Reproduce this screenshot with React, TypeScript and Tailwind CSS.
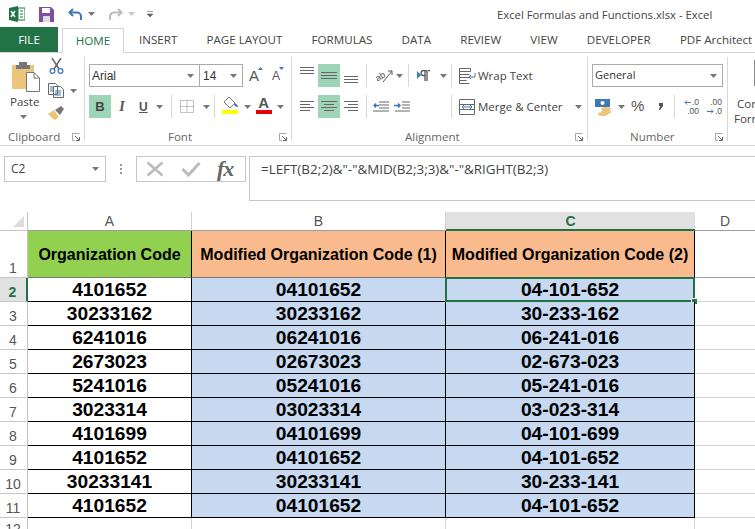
import React from "react";

const ribbonFont = "font-['Open_Sans',sans-serif]";
const groupLabel = "font-['Open_Sans',sans-serif] text-[11.5px] leading-[16px] text-[#666] whitespace-nowrap";
const groupBox = "shrink-0 border-r border-[#d8d8d8] h-[84px] flex flex-col [&>*]:shrink-0";

function Caret({ className = "" }: { className?: string }) {
  return (
    <svg width="7" height="4" viewBox="0 0 7 4" className={`shrink-0 ${className}`}>
      <path d="M0 0h7L3.5 4z" fill="#777" />
    </svg>
  );
}

function Launcher() {
  return (
    <svg width="8" height="8" viewBox="0 0 8 8" className="shrink-0 ml-auto">
      <path d="M.5 3V.5H7.500M.5 .5V7.500H3" fill="none" stroke="#aaa" />
      <path d="M3 3L7 7M7.500 4V7.500H4" fill="none" stroke="#666" />
    </svg>
  );
}

function Sep({ className = "" }: { className?: string }) {
  return <div className={`w-px h-[23px] bg-[#d8d8d8] shrink-0 ${className}`} />;
}

function AlignLines({ rows, active = false, className = "" }: { rows: number[][]; active?: boolean; className?: string }) {
  return (
    <div className={`h-[23px] flex items-center justify-center shrink-0 ${active ? "w-[22px] bg-[#9fd5b7]" : "w-[14px]"} ${className}`}>
      <svg width={active ? 16 : 14} height="23" viewBox={active ? "0 0 16 23" : "0 0 14 23"}>
        {rows.map((r, i) => (
          <path key={i} d={`M${r[1]} ${r[0]}.5H${r[2]}`} stroke="#666" strokeWidth="1" />
        ))}
      </svg>
    </div>
  );
}

function Clipboard() {
  return (
    <div className={`w-[85px] pr-[4px] ${groupBox}`}>
      <div className="flex h-[72px] pt-[5px]">
        <div className="w-[48px] flex flex-col items-start">
          <svg width="28" height="30" viewBox="0 0 28 30" className="ml-[12px]">
            <path d="M0 3h22v24H0z" fill="#ecc57d" />
            <path d="M7 0h8v3h3v4H4V3h3z" fill="#777" />
            <path d="M14.500 10.500H22l5.500 5.500V29.500H14.500z" fill="#fff" stroke="#777" />
            <path d="M22 10.500V16h5.500" fill="none" stroke="#777" />
          </svg>
          <div className={`${ribbonFont} text-[11.5px] leading-[14px] text-[#444] mt-[3px] ml-[10px]`}>Paste</div>
          <Caret className="mt-[6px] ml-[20px]" />
        </div>
        <div className="flex flex-col mt-[-4px]">
          <svg width="15" height="16" viewBox="0 0 15 16" className="ml-[1px]">
            <path d="M3 0l7 11M12 0L5 11" stroke="#666" strokeWidth="1.500" fill="none" />
            <circle cx="3.500" cy="13" r="2.400" fill="none" stroke="#3f79b5" strokeWidth="1.300" />
            <circle cx="11.500" cy="13" r="2.400" fill="none" stroke="#3f79b5" strokeWidth="1.300" />
          </svg>
          <div className="flex items-center mt-[9px]">
            <svg width="16" height="15" viewBox="0 0 16 15">
              <path d="M.5.500h7l2 2v9H.5zM5.500 3.500h7l3 3v8h-10z" fill="#fff" stroke="#666" />
              <path d="M2 4h3M2 6h3M2 8h3M7 8h6M7 10h6M7 12h6" stroke="#3f79b5" />
            </svg>
            <Caret className="ml-[6px]" />
          </div>
          <svg width="17" height="14" viewBox="0 0 17 14" className="mt-[8px]">
            <path d="M0 8l6-4 5 7-4 3C5 13 2 10 0 8z" fill="#ecc57d" />
            <path d="M7 4l6-4 3 3-4 6z" fill="#777" />
          </svg>
        </div>
      </div>
      <div className="flex items-center">
        <div className={`${groupLabel} ml-[8px]`}>Clipboard</div>
        <Launcher />
      </div>
    </div>
  );
}

function FontGroup() {
  return (
    <div className={`w-[207px] pl-[4px] pr-[4px] ${groupBox}`}>
      <div className="flex items-center mt-[7px]">
        <div className="w-[111px] h-[23px] shrink-0 border border-[#ababab] flex items-center justify-between pl-[2px] pr-[5px] font-['Liberation_Sans',sans-serif] text-[12px] text-[#333]">
          Arial
          <Caret />
        </div>
        <div className="w-[43px] h-[23px] shrink-0 border border-[#ababab] border-l-0 flex items-center justify-between pl-[3px] pr-[5px] font-['Liberation_Sans',sans-serif] text-[12px] text-[#333]">
          14
          <Caret />
        </div>
        <div className="w-[23px] ml-[6px] shrink-0 relative font-['Liberation_Sans',sans-serif] text-[15px] leading-[17px] text-[#555]">
          A
          <svg width="5" height="3" viewBox="0 0 5 3" className="absolute top-0 left-[9px]">
            <path d="M0 3h5L2.500 0z" fill="#3f79b5" />
          </svg>
        </div>
        <div className="w-[14px] shrink-0 relative font-['Liberation_Sans',sans-serif] text-[12px] leading-[15px] pt-[2px] text-[#555]">
          A
          <svg width="5" height="3" viewBox="0 0 5 3" className="absolute top-0 left-[7px]">
            <path d="M0 0h5L2.500 3z" fill="#3f79b5" />
          </svg>
        </div>
      </div>
      <div className="flex items-center mt-[8px] h-[23px]">
        <div className="w-[22px] h-[23px] shrink-0 bg-[#9fd5b7] flex items-center justify-center font-['Liberation_Sans',sans-serif] font-bold text-[13px] text-[#444]">
          B
        </div>
        <div className="w-[10px] ml-[6px] shrink-0 font-['Liberation_Serif',serif] italic font-bold text-[14px] text-[#555] text-center">I</div>
        <div className="ml-[12px] shrink-0 font-['Liberation_Sans',sans-serif] font-bold text-[12px] text-[#555] underline">U</div>
        <Caret className="ml-[8px]" />
        <Sep className="ml-[8px]" />
        <svg width="14" height="13" viewBox="0 0 14 13" className="ml-[8px] shrink-0">
          <path d="M.5.500h13v12H.5zM7 .5v12M.5 6.500h13" fill="none" stroke="#888" strokeDasharray="1 1" />
        </svg>
        <Caret className="ml-[9px]" />
        <Sep className="ml-[4px]" />
        <svg width="17" height="18" viewBox="0 0 17 18" className="ml-[7px] shrink-0 mt-[-3px]">
          <path d="M7 1l6 6-5 5-6-6z" fill="#fff" stroke="#777" />
          <path d="M13 7c2 1 3 3 3 4-2 0-3-1-4-2z" fill="#3f79b5" />
          <path d="M0 14h16v4H0z" fill="#ffff00" />
        </svg>
        <Caret className="ml-[5px]" />
        <div className="ml-[5px] w-[16px] shrink-0 flex flex-col items-center mt-[-3px]">
          <div className="font-['Liberation_Sans',sans-serif] font-bold text-[15px] leading-[14px] text-[#555]">A</div>
          <div className="w-[16px] h-[4px] bg-[#e8000f]" />
        </div>
        <Caret className="ml-[5px]" />
      </div>
      <div className="flex items-center mt-[11px]">
        <div className={`${groupLabel} ml-[79px]`}>Font</div>
        <Launcher />
      </div>
    </div>
  );
}

function AlignmentGroup() {
  return (
    <div className={`w-[296px] pl-[8px] pr-[4px] ${groupBox}`}>
      <div className="flex items-center mt-[7px] h-[23px]">
        <AlignLines rows={[[3, 0, 14], [6, 0, 14], [9, 0, 14]]} />
        <AlignLines rows={[[8, 0, 16], [11, 0, 16], [14, 0, 16]]} active className="ml-[4px]" />
        <AlignLines rows={[[12, 0, 14], [15, 0, 14], [18, 0, 14]]} className="ml-[4px]" />
        <Sep className="ml-[8px]" />
        <svg width="18" height="15" viewBox="0 0 18 15" className="ml-[8px] shrink-0 overflow-visible">
          <text x="0" y="12" fontSize="9" fontFamily="Liberation Sans" fill="#555" transform="rotate(-30 4 8)">ab</text>
          <path d="M8 14L17 3M17 3h-4M17 3v4" fill="none" stroke="#555" />
        </svg>
        <Caret className="ml-[3px]" />
        <Sep className="ml-[5px]" />
        <svg width="14" height="12" viewBox="0 0 14 12" className="ml-[8px] shrink-0">
          <path d="M0 1l4 4-4 4z" fill="#3f79b5" />
          <path d="M10 .5H6.500a2.500 2.500 0 0 0 0 5H8V11M10 .5V11M8 .5V5M11 .5h2" fill="none" stroke="#555" strokeWidth="1.300" />
        </svg>
        <Caret className="ml-[9px]" />
        <Sep className="ml-[4px]" />
        <svg width="17" height="16" viewBox="0 0 17 16" className="ml-[7px] shrink-0">
          <path d="M.5.500h11v3H.5zM.5 6.500h10M.5 9.500h10M.5 12.500h7M.5 15.500h10M.5.500v15" fill="none" stroke="#666" />
          <path d="M16 5v4h-6M12 7l-2 2 2 2" fill="none" stroke="#3f79b5" />
        </svg>
        <div className={`${ribbonFont} text-[11.5px] text-[#444] ml-[2px] whitespace-nowrap`}>Wrap Text</div>
      </div>
      <div className="flex items-center mt-[8px] h-[23px]">
        <AlignLines rows={[[6, 0, 14], [9, 0, 10], [12, 0, 14], [15, 0, 10]]} />
        <AlignLines rows={[[6, 0, 16], [9, 3, 13], [12, 0, 16], [15, 3, 13]]} active className="ml-[4px]" />
        <AlignLines rows={[[6, 0, 14], [9, 4, 14], [12, 0, 14], [15, 4, 14]]} className="ml-[4px]" />
        <Sep className="ml-[8px]" />
        <svg width="16" height="11" viewBox="0 0 16 11" className="ml-[6px] shrink-0">
          <path d="M6 1h10M6 4h10M6 7h10M0 10h16" stroke="#666" />
          <path d="M6 4.500H1M3 2.500l-2 2 2 2" fill="none" stroke="#3f79b5" strokeWidth="1.500" />
        </svg>
        <svg width="16" height="11" viewBox="0 0 16 11" className="ml-[5px] shrink-0">
          <path d="M8 1h8M8 4h8M8 7h8M1 10h15" stroke="#666" />
          <path d="M0 4.500h6M4 2.500l2 2-2 2" fill="none" stroke="#3f79b5" strokeWidth="1.500" />
        </svg>
        <Sep className="ml-[41px]" />
        <svg width="16" height="16" viewBox="0 0 16 16" className="ml-[7px] shrink-0">
          <path d="M.5.500h15v15H.5zM.5 5.500h15M.5 10.500h15" fill="#fff" stroke="#666" />
          <path d="M3 8h10M5 6l-2 2 2 2M11 6l2 2-2 2" fill="none" stroke="#3f79b5" />
        </svg>
        <div className={`${ribbonFont} text-[11.5px] text-[#444] ml-[3px] whitespace-nowrap`}>Merge &amp; Center</div>
        <Caret className="ml-[12px]" />
      </div>
      <div className="flex items-center mt-[11px]">
        <div className={`${groupLabel} ml-[105px]`}>Alignment</div>
        <Launcher />
      </div>
    </div>
  );
}

function NumberGroup() {
  return (
    <div className={`w-[140px] pl-[4px] pr-[4px] ${groupBox}`}>
      <div className="w-[131px] h-[23px] mt-[7px] border border-[#ababab] flex items-center justify-between pl-[2px] pr-[5px] font-['Open_Sans',sans-serif] text-[11px] text-[#333]">
        General
        <Caret />
      </div>
      <div className="flex items-center mt-[8px] h-[23px] pl-[3px]">
        <svg width="17" height="18" viewBox="0 0 17 18" className="shrink-0">
          <path d="M0 1h15v8H0z" fill="#3f79b5" />
          <circle cx="7.500" cy="5" r="2" fill="#fff" />
          <ellipse cx="11" cy="11" rx="5" ry="2" fill="#ecc57d" />
          <ellipse cx="11" cy="14" rx="5" ry="2" fill="#ecc57d" />
          <ellipse cx="8" cy="16" rx="5" ry="2" fill="#ecc57d" />
        </svg>
        <Caret className="ml-[6px]" />
        <div className="ml-[6px] w-[13px] shrink-0 font-['Liberation_Sans',sans-serif] text-[15px] text-[#555]">%</div>
        <svg width="6" height="7" viewBox="0 0 6 7" className="ml-[14px] shrink-0">
          <path d="M1 0h4v3L2 7H1l1-4H1z" fill="#555" />
        </svg>
        <Sep className="ml-[10px]" />
        <div className="ml-[7px] w-[17px] shrink-0 font-['Liberation_Sans',sans-serif] text-[8.5px] leading-[9px] text-[#555]">
          <div className="flex items-center justify-end">
            <svg width="7" height="5" viewBox="0 0 7 5" className="mr-[1px]">
              <path d="M7 2.500H1M3 .5l-2 2 2 2" fill="none" stroke="#3f79b5" />
            </svg>
            .0
          </div>
          <div className="text-right">.00</div>
        </div>
        <div className="ml-[6px] w-[17px] shrink-0 font-['Liberation_Sans',sans-serif] text-[8.5px] leading-[9px] text-[#555]">
          <div className="text-right">.00</div>
          <div className="flex items-center justify-end">
            <svg width="7" height="5" viewBox="0 0 7 5" className="mr-[1px]">
              <path d="M0 2.500h6M4 .5l2 2-2 2" fill="none" stroke="#3f79b5" />
            </svg>
            .0
          </div>
        </div>
      </div>
      <div className="flex items-center mt-[11px]">
        <div className={`${groupLabel} ml-[38px]`}>Number</div>
        <Launcher />
      </div>
    </div>
  );
}

function FormulaBar() {
  return (
    <div className="flex mt-[10px] h-[45px] pl-[4px]">
      <div className="w-[102px] h-[26px] shrink-0 border border-[#c6c6c6] flex items-center justify-between pl-[6px] pr-[6px] font-['Open_Sans',sans-serif] text-[12px] text-[#444]">
        C2
        <Caret />
      </div>
      <div className="w-[30px] h-[26px] shrink-0 flex flex-col items-center justify-center gap-[2px]">
        <div className="w-[2px] h-[2px] bg-[#999]" />
        <div className="w-[2px] h-[2px] bg-[#999]" />
        <div className="w-[2px] h-[2px] bg-[#999]" />
      </div>
      <div className="w-[110px] h-[26px] shrink-0 border border-[#c6c6c6] flex items-center pl-[9px]">
        <svg width="18" height="16" viewBox="0 0 18 16" className="shrink-0">
          <path d="M1.500 1.500l15 13M16.500 1.500l-15 13" stroke="#bbb" strokeWidth="2.500" fill="none" />
        </svg>
        <svg width="20" height="16" viewBox="0 0 20 16" className="ml-[17px] shrink-0">
          <path d="M1.500 8l6 6L18.500 2" stroke="#bbb" strokeWidth="3" fill="none" />
        </svg>
        <div className="ml-[16px] font-['Liberation_Serif',serif] italic font-bold text-[22px] leading-[22px] text-[#666] tracking-[-1px]">fx</div>
      </div>
      <div className="ml-[3px] flex-1 h-[45px] border border-r-0 border-[#c6c6c6] pl-[11px] pt-[3px] font-['Open_Sans',sans-serif] text-[13.4px] leading-[19px] text-[#444] whitespace-nowrap">
        =LEFT(B2;2)&amp;"-"&amp;MID(B2;3;3)&amp;"-"&amp;RIGHT(B2;3)
      </div>
    </div>
  );
}

const rows = [
  ["4101652", "04101652", "04-101-652"],
  ["30233162", "30233162", "30-233-162"],
  ["6241016", "06241016", "06-241-016"],
  ["2673023", "02673023", "02-673-023"],
  ["5241016", "05241016", "05-241-016"],
  ["3023314", "03023314", "03-023-314"],
  ["4101699", "04101699", "04-101-699"],
  ["4101652", "04101652", "04-101-652"],
  ["30233141", "30233141", "30-233-141"],
  ["4101652", "04101652", "04-101-652"],
];

const colHead = "h-[19px] pt-[1px] flex items-center justify-center border-b border-[#9e9e9e] font-['Liberation_Sans',sans-serif] text-[14px] text-[#555]";
const headCell =
  "h-[47px] flex items-center justify-center border-r border-black border-b border-b-[#777] font-['Liberation_Sans',sans-serif] font-bold text-[16px] text-black pt-[1px]";
const dataCell =
  "h-[24px] pt-[1px] flex items-center justify-center border-r border-black border-b border-b-black font-['Liberation_Sans',sans-serif] font-bold text-[19.2px] text-black";
const rowHead =
  "flex items-end justify-center pr-[1px] border-r border-b border-[#c6c6c6] font-['Liberation_Sans',sans-serif] text-[14px] leading-[18px] text-[#555]";

function Sheet() {
  return (
    <div className="grid grid-cols-[28px_164px_254px_249px_60px] mt-[11px]">
      <div className="h-[19px] border-r border-b border-[#c6c6c6] flex items-end justify-end pr-[3px] pb-[3px]">
        <svg width="11" height="11" viewBox="0 0 11 11">
          <path d="M11 0v11H0z" fill="#dcdcdc" />
        </svg>
      </div>
      <div className={`${colHead} border-r border-r-[#d0d0d0]`}>A</div>
      <div className={`${colHead} border-r border-r-[#d0d0d0]`}>B</div>
      <div className="h-[19px] pt-[1px] flex items-center justify-center bg-[#e1e1e1] border-b-2 border-[#217346] font-['Liberation_Sans',sans-serif] font-bold text-[14px] text-[#217346]">
        C
      </div>
      <div className={colHead}>D</div>

      <div className={`${rowHead} h-[47px]`}>1</div>
      <div className={`${headCell} bg-[#92d050]`}>Organization Code</div>
      <div className={`${headCell} bg-[#f9bb8d]`}>Modified Organization Code (1)</div>
      <div className={`${headCell} bg-[#f9bb8d]`}>Modified Organization Code (2)</div>
      <div className="h-[47px] border-b border-[#9e9e9e]" />

      {rows.map((row, i) => {
        const selected = i === 0;
        return (
          <React.Fragment key={i}>
            <div
              className={`${rowHead} h-[24px] ${
                selected ? "bg-[#e1e1e1] border-r-2 border-r-[#217346] font-bold text-[#217346]" : ""
              }`}
            >
              {i + 2}
            </div>
            <div className={`${dataCell} bg-white`}>{row[0]}</div>
            <div className={`${dataCell} bg-[#c6d9f0]`}>{row[1]}</div>
            <div className={`${dataCell} bg-[#c6d9f0] relative`}>
              {row[2]}
              {selected && (
                <>
                  <div className="absolute left-[-1px] top-[-1px] right-[-1px] bottom-[-1px] border-2 border-[#217346]" />
                  <div className="absolute right-[-4px] bottom-[-4px] w-[5px] h-[5px] bg-[#217346] border border-white box-content" />
                </>
              )}
            </div>
            <div className="h-[24px] border-b border-[#d4d4d4]" />
          </React.Fragment>
        );
      })}

      <div className="h-[11px] border-r border-[#c6c6c6] pr-[1px] font-['Liberation_Sans',sans-serif] text-[14px] leading-[18px] text-[#555] text-center overflow-hidden pt-[2px]">
        12
      </div>
      <div className="h-[11px] border-r border-[#d4d4d4]" />
      <div className="h-[11px] border-r border-[#d4d4d4]" />
      <div className="h-[11px] border-r border-[#d4d4d4]" />
      <div className="h-[11px]" />
    </div>
  );
}

export default function App() {
  const tabs = ["INSERT", "PAGE LAYOUT", "FORMULAS", "DATA", "REVIEW", "VIEW", "DEVELOPER", "PDF Architect"];
  return (
    <div className="w-[755px] h-[529px] overflow-hidden bg-white">
      {/* title bar */}
      <div className="h-[28px] flex items-center relative">
        <svg width="16" height="16" viewBox="0 0 16 16" className="ml-[9px] shrink-0">
          <path d="M0 2l9-2v16l-9-2z" fill="#217346" />
          <path d="M9 2h7v12H9z" fill="#fff" stroke="#217346" />
          <path d="M11 5h3M11 8h3M11 11h3" stroke="#217346" />
          <path d="M2 5l4 6M6 5l-4 6" stroke="#fff" strokeWidth="1.400" />
        </svg>
        <svg width="15" height="15" viewBox="0 0 15 15" className="ml-[14px] shrink-0">
          <path d="M0 0h12l3 3v12H0z" fill="#7e4f9e" />
          <path d="M3 1h8v5H3z" fill="#fff" />
          <path d="M4 9h7v6H4z" fill="#ddd" />
        </svg>
        <svg width="15" height="13" viewBox="0 0 15 13" className="ml-[14px] shrink-0">
          <path d="M5 1L1.500 4.500 5 8" fill="none" stroke="#3f79b5" strokeWidth="2" />
          <path d="M2 4.500h7a4 4 0 0 1 4 4V12" fill="none" stroke="#3f79b5" strokeWidth="2" />
        </svg>
        <Caret className="ml-[5px]" />
        <svg width="15" height="13" viewBox="0 0 15 13" className="ml-[13px] shrink-0">
          <path d="M10 1l3.500 3.500L10 8" fill="none" stroke="#bbb" strokeWidth="2" />
          <path d="M13 4.500H6a4 4 0 0 0-4 4V12" fill="none" stroke="#bbb" strokeWidth="2" />
        </svg>
        <Caret className="ml-[5px] opacity-40" />
        <svg width="6" height="6" viewBox="0 0 6 6" className="ml-[12px] shrink-0">
          <path d="M0 .5h6M0 3h6L3 6z" fill="#666" stroke="#666" strokeWidth=".6" />
        </svg>
        <div className={`${ribbonFont} text-[11.3px] text-[#444] absolute left-[497px] top-[7px] whitespace-nowrap`}>
          Excel Formulas and Functions.xlsx - Excel
        </div>
      </div>

      {/* tabs */}
      <div className={`${ribbonFont} h-[25px] flex items-end border-b border-[#d4d4d4] text-[11.6px]`}>
        <div className="w-[58px] h-[25px] shrink-0 bg-[#217346] text-white flex items-center justify-center">FILE</div>
        <div className="w-[62px] h-[25px] shrink-0 ml-[4px] mb-[-1px] border border-b-0 border-[#d4d4d4] bg-white text-[#217346] flex items-center justify-center">
          HOME
        </div>
        <div className="flex h-[24px] items-center gap-[29.2px] ml-[15px] text-[#444] whitespace-nowrap">
          {tabs.map((t) => (
            <div key={t} className="shrink-0">{t}</div>
          ))}
        </div>
      </div>

      {/* ribbon */}
      <div className="h-[93px] flex items-start border-b border-[#d4d4d4] pt-[4px] overflow-hidden">
        <Clipboard />
        <FontGroup />
        <AlignmentGroup />
        <NumberGroup />
        <div className="flex-1 overflow-hidden">
          <div className="w-px h-[26px] bg-[#888] ml-[26px] mt-[3px]" />
          <div className={`${ribbonFont} text-[11.5px] leading-[15px] text-[#444] pt-[10px] whitespace-nowrap`}>
            <div className="pl-[9px]">Cor</div>
            <div className="pl-[6px]">Forr</div>
          </div>
        </div>
      </div>

      <FormulaBar />
      <Sheet />
    </div>
  );
}
